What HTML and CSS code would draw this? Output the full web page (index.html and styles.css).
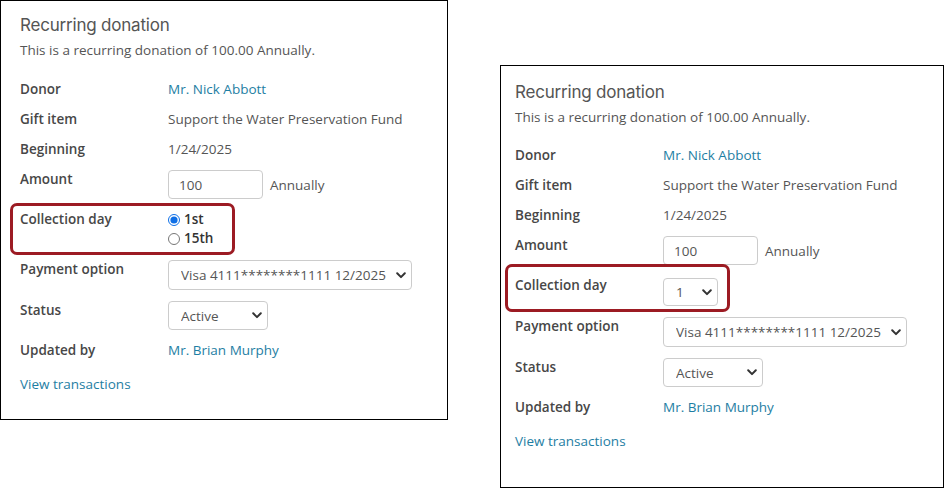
FILE: index.html
```html
<!DOCTYPE html>
<html lang="en">
<head>
<meta charset="utf-8">
<title>Recurring donation</title>
<link rel="stylesheet" href="styles.css">
</head>
<body>
<div class="page">
  <section class="panel panel--a">
    <h2 class="title">Recurring donation</h2>
    <p class="subtitle">This is a recurring donation of 100.00 Annually.</p>
    <div class="row"><div class="label">Donor</div><div class="value"><a class="link" href="#">Mr. Nick Abbott</a></div></div>
    <div class="row"><div class="label">Gift item</div><div class="value">Support the Water Preservation Fund</div></div>
    <div class="row"><div class="label">Beginning</div><div class="value">1/24/2025</div></div>
    <div class="row"><div class="label">Amount</div><div class="field"><input class="input" type="text" value="100"><span>Annually</span></div></div>
    <div class="row row--hl hl-a">
      <div class="label">Collection day</div>
      <div class="radios">
        <label class="radio-opt"><input type="radio" name="day" checked>1st</label>
        <label class="radio-opt"><input type="radio" name="day">15th</label>
      </div>
    </div>
    <div class="row"><div class="label">Payment option</div>
      <div class="select select--pay"><select><option>Visa 4111********1111 12/2025</option></select><svg class="chev" viewBox="0 0 10 7" width="10" height="7"><path d="M1.2 1.3 L5 5.1 L8.8 1.3" fill="none" stroke="#333" stroke-width="2" stroke-linecap="round" stroke-linejoin="round"/></svg></div>
    </div>
    <div class="row"><div class="label">Status</div>
      <div class="select select--status"><select><option>Active</option></select><svg class="chev" viewBox="0 0 10 7" width="10" height="7"><path d="M1.2 1.3 L5 5.1 L8.8 1.3" fill="none" stroke="#333" stroke-width="2" stroke-linecap="round" stroke-linejoin="round"/></svg></div>
    </div>
    <div class="row row--last"><div class="label">Updated by</div><div class="value"><a class="link" href="#">Mr. Brian Murphy</a></div></div>
    <a class="link view" href="#">View transactions</a>
  </section>

  <section class="panel panel--b">
    <h2 class="title">Recurring donation</h2>
    <p class="subtitle">This is a recurring donation of 100.00 Annually.</p>
    <div class="row"><div class="label">Donor</div><div class="value"><a class="link" href="#">Mr. Nick Abbott</a></div></div>
    <div class="row"><div class="label">Gift item</div><div class="value">Support the Water Preservation Fund</div></div>
    <div class="row"><div class="label">Beginning</div><div class="value">1/24/2025</div></div>
    <div class="row"><div class="label">Amount</div><div class="field"><input class="input" type="text" value="100"><span>Annually</span></div></div>
    <div class="row row--hl hl-b">
      <div class="label">Collection day</div>
      <div class="select select--day"><select><option>1</option></select><svg class="chev" viewBox="0 0 10 7" width="10" height="7"><path d="M1.2 1.3 L5 5.1 L8.8 1.3" fill="none" stroke="#333" stroke-width="2" stroke-linecap="round" stroke-linejoin="round"/></svg></div>
    </div>
    <div class="row"><div class="label">Payment option</div>
      <div class="select select--pay"><select><option>Visa 4111********1111 12/2025</option></select><svg class="chev" viewBox="0 0 10 7" width="10" height="7"><path d="M1.2 1.3 L5 5.1 L8.8 1.3" fill="none" stroke="#333" stroke-width="2" stroke-linecap="round" stroke-linejoin="round"/></svg></div>
    </div>
    <div class="row"><div class="label">Status</div>
      <div class="select select--status"><select><option>Active</option></select><svg class="chev" viewBox="0 0 10 7" width="10" height="7"><path d="M1.2 1.3 L5 5.1 L8.8 1.3" fill="none" stroke="#333" stroke-width="2" stroke-linecap="round" stroke-linejoin="round"/></svg></div>
    </div>
    <div class="row row--last"><div class="label">Updated by</div><div class="value"><a class="link" href="#">Mr. Brian Murphy</a></div></div>
    <a class="link view" href="#">View transactions</a>
  </section>
</div>
</body>
</html>
```

FILE: styles.css
```css
html, body {
  margin: 0;
  padding: 0;
  background: #fff;
}
body {
  font-family: "Open Sans", "Liberation Sans", sans-serif;
  font-size: 13.5px;
  color: #555;
}
.page {
  display: flex;
  align-items: flex-start;
  gap: 52px;
}
.panel {
  box-sizing: border-box;
  border: 1px solid #000;
  background: #fff;
}
.panel--a {
  width: 448px;
  height: 420px;
  padding: 13px 19px;
}
.panel--b {
  width: 444px;
  height: 423px;
  margin-top: 65px;
  padding: 15px 14px;
}
.title {
  margin: 0 0 4px;
  font-family: "Inter", "Open Sans", sans-serif;
  font-weight: 400;
  font-size: 17px;
  line-height: 22px;
  color: #555;
  letter-spacing: -0.2px;
}
.subtitle {
  margin: 0 0 19px;
  line-height: 20px;
}
.panel--b .subtitle {
  margin-bottom: 18px;
}
.row {
  position: relative;
  display: flex;
  align-items: flex-start;
  margin-bottom: 10px;
  line-height: 20px;
}
.row--last {
  margin-bottom: 14px;
}
.label {
  flex: none;
  width: 148px;
  font-weight: 600;
  color: #474747;
}
.value {
  color: #555;
}
.link {
  color: #1e7ea3;
  text-decoration: none;
}
.view {
  display: block;
  line-height: 20px;
}
.field {
  display: flex;
  align-items: center;
  gap: 7px;
  margin-top: 1px;
}
.input {
  box-sizing: border-box;
  width: 95px;
  height: 29px;
  border: 1px solid #ccc;
  border-radius: 4px;
  padding: 0 10px;
  font: inherit;
  color: #555;
  outline: none;
}
.radios {
  display: flex;
  flex-direction: column;
  margin-top: 1px;
  padding-bottom: 1px;
}
.radio-opt {
  display: flex;
  align-items: center;
  gap: 4px;
  line-height: 19px;
  font-weight: 600;
  color: #333;
}
.radio-opt input {
  margin: 0;
  width: 12px;
  height: 12px;
  accent-color: #0f6fe6;
}
.select {
  box-sizing: border-box;
  display: flex;
  align-items: center;
  height: 29px;
  margin-top: 1px;
  border: 1px solid #ccc;
  border-radius: 4px;
  background: #fff;
}
.select select {
  flex: 1;
  min-width: 0;
  appearance: none;
  -webkit-appearance: none;
  border: 0;
  background: transparent;
  font: inherit;
  color: #555;
  padding: 0 0 0 12px;
  outline: none;
}
.chev {
  flex: none;
  margin-right: 5px;
  pointer-events: none;
}
.select--pay {
  width: 244px;
  height: 30px;
}
.select--status { width: 100px; }
.select--day {
  width: 55px;
  height: 28px;
  margin-top: 3px;
}
.row--hl::before {
  content: "";
  position: absolute;
  left: -10px;
  width: 225px;
  box-sizing: border-box;
  border: 3px solid #9c1b23;
  border-radius: 7px;
  pointer-events: none;
}
.hl-a::before {
  top: -6px;
  height: 52px;
}
.hl-b::before {
  top: -11px;
  height: 48px;
}
```
